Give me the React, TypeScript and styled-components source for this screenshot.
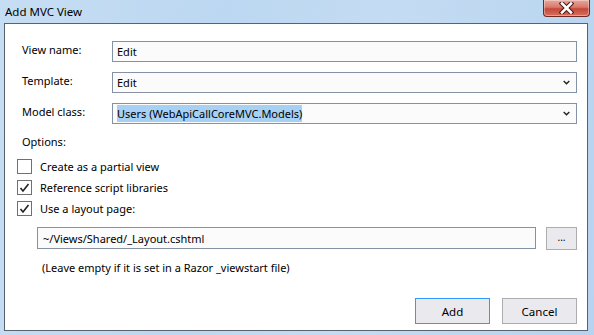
import React, { FunctionComponent } from 'react';
import styled, { createGlobalStyle } from 'styled-components';

const GlobalStyle = createGlobalStyle`
    html, body {
        margin: 0;
        padding: 0;
    }
    body {
        font-family: "Noto Sans", "Open Sans", "Liberation Sans", sans-serif;
        font-size: 11px;
        color: #000;
    }
`;

const Window = styled.div`
    width: 594px;
    height: 335px;
    box-sizing: border-box;
    display: flex;
    flex-direction: column;
    padding: 0 6px 4px 4px;
    background: linear-gradient(100deg, #c6def4 0%, #bcd7f1 35%, #c4dcf3 60%, #b7d3ef 100%);
`;

const TitleBar = styled.div`
    height: 23px;
    display: flex;
    align-items: flex-start;
    justify-content: space-between;
    margin-right: -2px;
`;

const Title = styled.span`
    padding: 4px 0 0 1px;
    font-size: 11.5px;
    line-height: 15px;
    color: #000;
`;

const CloseButton = styled.div`
    width: 47px;
    height: 17px;
    box-sizing: border-box;
    display: flex;
    align-items: center;
    justify-content: center;
    border: 1px solid #6e2a22;
    border-top: none;
    border-radius: 0 0 4px 4px;
    background: linear-gradient(#e8a89c 0%, #d9796a 45%, #c2483a 55%, #d8705e 100%);
    box-shadow: inset 0 0 0 1px rgba(255, 255, 255, 0.35);
`;

const Client = styled.div`
    flex: 1;
    display: flex;
    flex-direction: column;
    border: 1px solid #59636f;
    background: #fff;
    padding: 17px 10px 6px 12px;
`;

const FieldGrid = styled.div`
    display: grid;
    grid-template-columns: 90px 1fr;
    row-gap: 10px;
    padding-left: 5px;
    align-items: center;
`;

const Label = styled.div`
    line-height: 15px;
    padding-bottom: 4px;
`;

const Field = styled.div<{ $height?: number }>`
    height: ${p => p.$height ?? 21}px;
    box-sizing: border-box;
    display: flex;
    align-items: center;
    justify-content: space-between;
    border: 1px solid #8592a3;
    background: #fbfbfb;
    padding: 0 6px 0 4px;
    line-height: 15px;
`;

const Selected = styled.span`
    background: #a7d0f5;
    padding: 1px 0;
`;

const OptionsLabel = styled.div`
    margin: 10px 0 7px 5px;
    line-height: 15px;
`;

const CheckRow = styled.div`
    height: 21px;
    display: flex;
    align-items: center;
    gap: 8px;
`;

const Box = styled.div`
    width: 15px;
    height: 15px;
    box-sizing: border-box;
    border: 1px solid #707070;
    background: #fff;
    display: flex;
    align-items: center;
    justify-content: center;
`;

const LayoutRow = styled.div`
    display: flex;
    gap: 10px;
    margin: 8px 0 0 20px;
`;

const BrowseButton = styled.div`
    width: 31px;
    height: 23px;
    box-sizing: border-box;
    border: 1px solid #adadad;
    background: #e9e9ee;
    display: flex;
    align-items: center;
    justify-content: center;
    font-size: 10px;
    padding-bottom: 3px;
`;

const Note = styled.div`
    margin: 10px 0 0 25px;
    line-height: 15px;
`;

const ButtonBar = styled.div`
    margin-top: auto;
    display: flex;
    justify-content: flex-end;
    gap: 12px;
`;

const DialogButton = styled.div<{ $default?: boolean }>`
    width: 75px;
    height: 26px;
    box-sizing: border-box;
    border: 1px solid ${p => (p.$default ? '#3399ff' : '#adadad')};
    background: #eaeaee;
    display: flex;
    align-items: center;
    justify-content: center;
    font-size: 11.5px;
    line-height: 15px;
`;

const Chevron: FunctionComponent = () => (
    <svg width="7" height="5" viewBox="0 0 7 5">
        <polyline points="0.7,1 3.5,3.8 6.3,1" fill="none" stroke="#222" strokeWidth="1.4" />
    </svg>
);

const Check: FunctionComponent = () => (
    <svg width="11" height="10" viewBox="0 0 11 10">
        <polyline points="1.5,5 4,8 9.5,1" fill="none" stroke="#222" strokeWidth="1.6" />
    </svg>
);

const CloseGlyph: FunctionComponent = () => (
    <svg width="15" height="12" viewBox="0 0 15 12">
        <path d="M3,1.5 L12,10.5 M12,1.5 L3,10.5" stroke="#4a1712" strokeWidth="4.6" strokeLinecap="square" />
        <path d="M3,1.5 L12,10.5 M12,1.5 L3,10.5" stroke="#fff" strokeWidth="2.6" strokeLinecap="square" />
    </svg>
);

interface CheckOptionProps {
    checked?: boolean;
    label: string;
}

const CheckOption: FunctionComponent<CheckOptionProps> = ({ checked, label }) => (
    <CheckRow>
        <Box>{checked ? <Check /> : null}</Box>
        <span>{label}</span>
    </CheckRow>
);

const App: FunctionComponent = () => {
    return (
        <>
            <GlobalStyle />
            <Window>
                <TitleBar>
                    <Title>Add MVC View</Title>
                    <CloseButton><CloseGlyph /></CloseButton>
                </TitleBar>
                <Client>
                    <FieldGrid>
                        <Label>View name:</Label>
                        <Field>Edit</Field>
                        <Label>Template:</Label>
                        <Field>Edit<Chevron /></Field>
                        <Label>Model class:</Label>
                        <Field><Selected>Users (WebApiCallCoreMVC.Models)</Selected><Chevron /></Field>
                    </FieldGrid>
                    <OptionsLabel>Options:</OptionsLabel>
                    <CheckOption label="Create as a partial view" />
                    <CheckOption checked label="Reference script libraries" />
                    <CheckOption checked label="Use a layout page:" />
                    <LayoutRow>
                        <Field $height={22} style={{ flex: 1, paddingLeft: 5 }}>~/Views/Shared/_Layout.cshtml</Field>
                        <BrowseButton>...</BrowseButton>
                    </LayoutRow>
                    <Note>(Leave empty if it is set in a Razor _viewstart file)</Note>
                    <ButtonBar>
                        <DialogButton $default>Add</DialogButton>
                        <DialogButton>Cancel</DialogButton>
                    </ButtonBar>
                </Client>
            </Window>
        </>
    );
};

export default App;
